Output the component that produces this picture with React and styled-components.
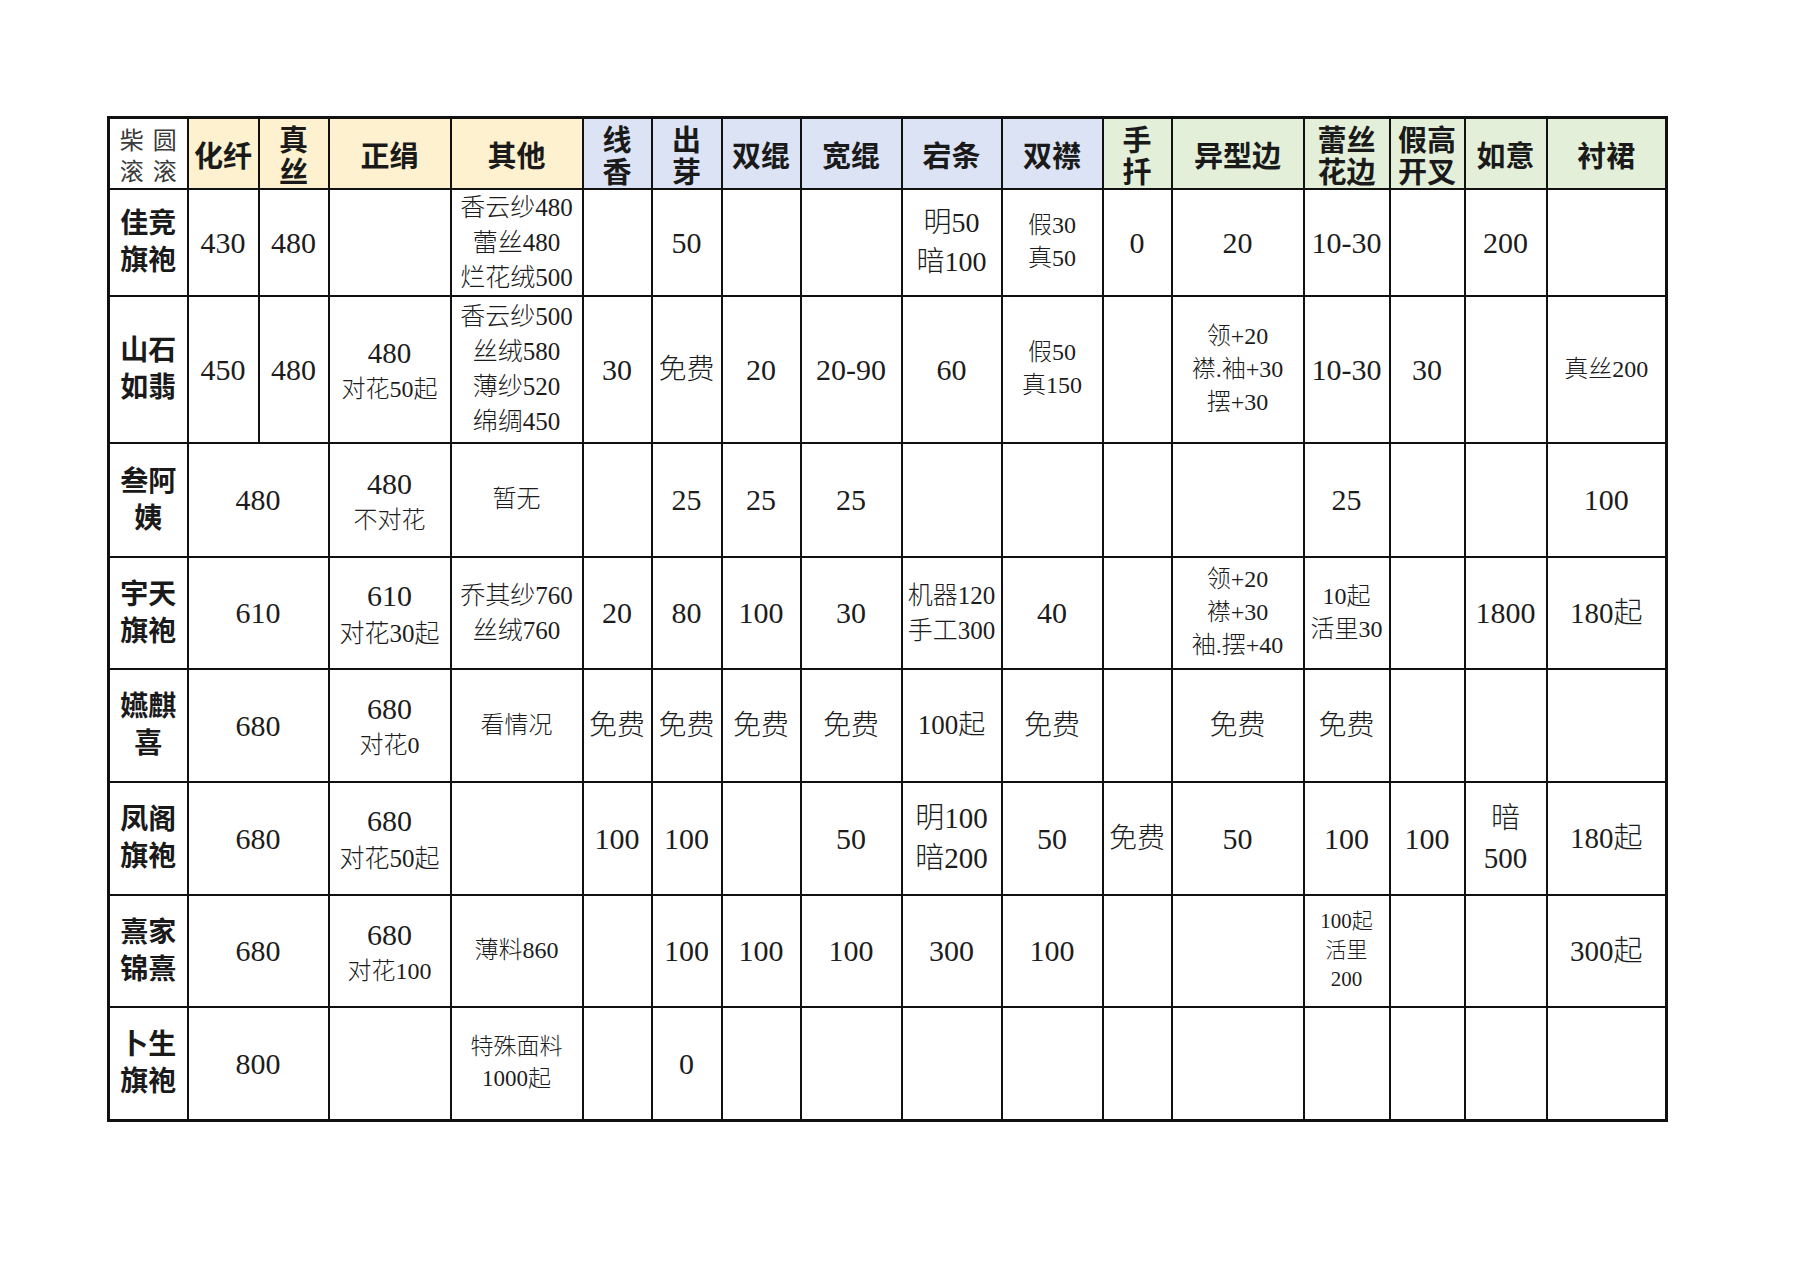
import React from "react";
import styled, { createGlobalStyle } from "styled-components";

const GlobalStyle = createGlobalStyle`
  html, body { margin: 0; padding: 0; background: #ffffff; }
  body { font-family: "Liberation Serif", "Noto Sans CJK SC", serif; color: #1c1c1c; }
`;

const Page = styled.div`
  padding: 116px 0 0 107px;
`;

const Sheet = styled.table`
  border-collapse: collapse;
  table-layout: fixed;
  width: 1558px;
  border: 3px solid #111;
`;

const Row = styled.tr`
  height: ${(p) => p.$h}px;
`;

const TONES = { none: "#ffffff", yellow: "#fdf1cf", blue: "#dce3f4", green: "#e3efd9" };

const Head = styled.th`
  border: 2px solid #111;
  padding: 0;
  text-align: center;
  vertical-align: middle;
  background: ${(p) => TONES[p.$tone]};
  font-family: "Liberation Serif", "Noto Sans CJK SC", serif;
  font-weight: 700;
  font-size: 29px;
  line-height: 32px;
  color: #1a1a1a;
`;

const HeadLines = styled.div`
  margin: 4px 0 -4px;
`;

const Corner = styled(Head)`
  font-weight: 400;
  font-size: 24px;
  line-height: 31px;
  letter-spacing: 9px;
  text-indent: 9px;
  color: #3a3a3a;
`;

const Label = styled.th`
  border: 2px solid #111;
  padding: 0;
  text-align: center;
  vertical-align: middle;
  font-weight: 700;
  font-size: 28px;
  line-height: 37px;
  color: #1a1a1a;
`;

const Cell = styled.td`
  border: 2px solid #111;
  padding: 0;
  text-align: center;
  vertical-align: middle;
  white-space: nowrap;
  font-weight: 300;
  color: #1c1c1c;
`;

const Line = styled.span`
  display: block;
  font-size: ${(p) => p.$size}px;
  line-height: ${(p) => Math.round(p.$size * 1.38)}px;
`;

const COLS = [79, 71, 70, 122, 132, 69, 70, 79, 101, 100, 101, 69, 132, 86, 75, 82, 120];
const HEIGHTS = [71, 107, 147, 114, 112, 113, 113, 112, 114];

const HEADERS = [
  { t: ["化纤"], tone: "yellow" },
  { t: ["真", "丝"], tone: "yellow" },
  { t: ["正绢"], tone: "yellow" },
  { t: ["其他"], tone: "yellow" },
  { t: ["线", "香"], tone: "blue" },
  { t: ["出", "芽"], tone: "blue" },
  { t: ["双绲"], tone: "blue" },
  { t: ["宽绲"], tone: "blue" },
  { t: ["宕条"], tone: "blue" },
  { t: ["双襟"], tone: "blue" },
  { t: ["手", "扦"], tone: "green" },
  { t: ["异型边"], tone: "green" },
  { t: ["蕾丝", "花边"], tone: "green" },
  { t: ["假高", "开叉"], tone: "green" },
  { t: ["如意"], tone: "green" },
  { t: ["衬裙"], tone: "green" },
];

const c = (lines, size = 30, sub, span = 1) => ({
  lines: Array.isArray(lines) ? lines : lines ? [lines] : [],
  size,
  sub: sub || size,
  span,
});
const e = () => c("");
const empties = (n) => Array.from({ length: n }, e);

const ROWS = [
  {
    label: ["佳竞", "旗袍"],
    cells: [
      c("430"), c("480"), e(), c(["香云纱480", "蕾丝480", "烂花绒500"], 25), e(), c("50"), e(), e(),
      c(["明50", "暗100"], 28), c(["假30", "真50"], 24), c("0"), c("20"), c("10-30"), e(), c("200"), e(),
    ],
  },
  {
    label: ["山石", "如翡"],
    cells: [
      c("450"), c("480"), c(["480", "对花50起"], 29, 24), c(["香云纱500", "丝绒580", "薄纱520", "绵绸450"], 25),
      c("30"), c("免费", 28), c("20"), c("20-90"), c("60"), c(["假50", "真150"], 24), e(),
      c(["领+20", "襟.袖+30", "摆+30"], 24), c("10-30"), c("30"), e(), c("真丝200", 24),
    ],
  },
  {
    label: ["叁阿", "姨"],
    cells: [
      c("480", 30, 30, 2), c(["480", "不对花"], 30, 24), c("暂无", 24), e(), c("25"), c("25"), c("25"),
      e(), e(), e(), e(), c("25"), e(), e(), c("100"),
    ],
  },
  {
    label: ["宇天", "旗袍"],
    cells: [
      c("610", 30, 30, 2), c(["610", "对花30起"], 30, 25), c(["乔其纱760", "丝绒760"], 25), c("20"), c("80"),
      c("100"), c("30"), c(["机器120", "手工300"], 25), c("40"), e(), c(["领+20", "襟+30", "袖.摆+40"], 24),
      c(["10起", "活里30"], 24), e(), c("1800"), c("180起", 29),
    ],
  },
  {
    label: ["嬿麒", "喜"],
    cells: [
      c("680", 30, 30, 2), c(["680", "对花0"], 30, 24), c("看情况", 24), c("免费", 28), c("免费", 28),
      c("免费", 28), c("免费", 28), c("100起", 27), c("免费", 28), e(), c("免费", 28), c("免费", 28), e(), e(), e(),
    ],
  },
  {
    label: ["凤阁", "旗袍"],
    cells: [
      c("680", 30, 30, 2), c(["680", "对花50起"], 30, 25), e(), c("100"), c("100"), e(), c("50"),
      c(["明100", "暗200"], 29), c("50"), c("免费", 28), c("50"), c("100"), c("100"), c(["暗", "500"], 29),
      c("180起", 29),
    ],
  },
  {
    label: ["熹家", "锦熹"],
    cells: [
      c("680", 30, 30, 2), c(["680", "对花100"], 30, 24), c("薄料860", 24), e(), c("100"), c("100"), c("100"),
      c("300"), c("100"), e(), e(), c(["100起", "活里", "200"], 21), e(), e(), c("300起", 29),
    ],
  },
  {
    label: ["卜生", "旗袍"],
    cells: [c("800", 30, 30, 2), e(), c(["特殊面料", "1000起"], 23), e(), c("0"), ...empties(10)],
  },
];

function Lines({ cell }) {
  return cell.lines.map((t, i) => (
    <Line key={i} $size={i === 0 ? cell.size : cell.sub}>
      {t}
    </Line>
  ));
}

export default function App() {
  return (
    <Page>
      <GlobalStyle />
      <Sheet>
        <colgroup>
          {COLS.map((w, i) => (
            <col key={i} style={{ width: w }} />
          ))}
        </colgroup>
        <thead>
          <Row $h={HEIGHTS[0]}>
            <Corner $tone="none">
              <HeadLines>
                <div>柴圆</div>
                <div>滚滚</div>
              </HeadLines>
            </Corner>
            {HEADERS.map((h, i) => (
              <Head key={i} $tone={h.tone}>
                <HeadLines>
                  {h.t.map((t, j) => (
                    <div key={j}>{t}</div>
                  ))}
                </HeadLines>
              </Head>
            ))}
          </Row>
        </thead>
        <tbody>
          {ROWS.map((r, i) => (
            <Row key={i} $h={HEIGHTS[i + 1]}>
              <Label>
                {r.label.map((t, j) => (
                  <div key={j}>{t}</div>
                ))}
              </Label>
              {r.cells.map((cell, j) => (
                <Cell key={j} colSpan={cell.span}>
                  <Lines cell={cell} />
                </Cell>
              ))}
            </Row>
          ))}
        </tbody>
      </Sheet>
    </Page>
  );
}
